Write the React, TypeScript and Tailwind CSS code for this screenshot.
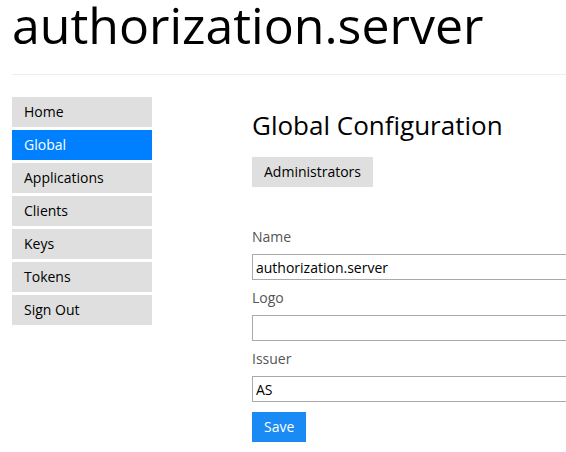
import React from 'react'

const navItems = ['Home', 'Global', 'Applications', 'Clients', 'Keys', 'Tokens', 'Sign Out']

function Field({ label, value }: { label: string; value: string }) {
    return (
        <div className="mt-[8px] first:mt-0">
            <div className="text-sm leading-5 text-[#555] mb-[7px]">{label}</div>
            <input
                readOnly
                value={value}
                className="block w-[340px] h-[26px] border border-[#aaa] px-[3px] text-sm text-black outline-none"
            />
        </div>
    )
}

export default function App() {
    return (
        <div className="w-[566px] h-[452px] overflow-hidden bg-white text-black font-['Open_Sans',sans-serif]">
            <div className="pl-3">
                <h1 className="text-[50px] leading-[50px] font-normal text-black">authorization.server</h1>
                <hr className="mt-[24px] border-0 border-t border-[#eee]" />
            </div>

            <div className="flex mt-[22px] px-3">
                <nav className="w-[140px] flex flex-col gap-[3px] shrink-0">
                    {navItems.map((item) => (
                        <a
                            key={item}
                            href="#"
                            className={
                                item === 'Global'
                                    ? 'block h-[30px] leading-[30px] px-3 text-sm bg-[#0080ff] text-white'
                                    : 'block h-[30px] leading-[30px] px-3 text-sm bg-[#dfdfdf] text-black'
                            }
                        >
                            {item}
                        </a>
                    ))}
                </nav>

                <main className="ml-[100px] shrink-0">
                    <h2 className="text-[26px] leading-[36px] mt-[10px] font-normal">Global Configuration</h2>
                    <button className="mt-[14px] h-[30px] px-3 text-sm bg-[#dfdfdf] text-black">
                        Administrators
                    </button>

                    <form className="mt-[40px]">
                        <Field label="Name" value="authorization.server" />
                        <Field label="Logo" value="" />
                        <Field label="Issuer" value="AS" />
                        <button type="button" className="mt-[10px] h-[30px] px-3 text-sm bg-[#1a8af5] text-white">
                            Save
                        </button>
                    </form>
                </main>
            </div>
        </div>
    )
}
